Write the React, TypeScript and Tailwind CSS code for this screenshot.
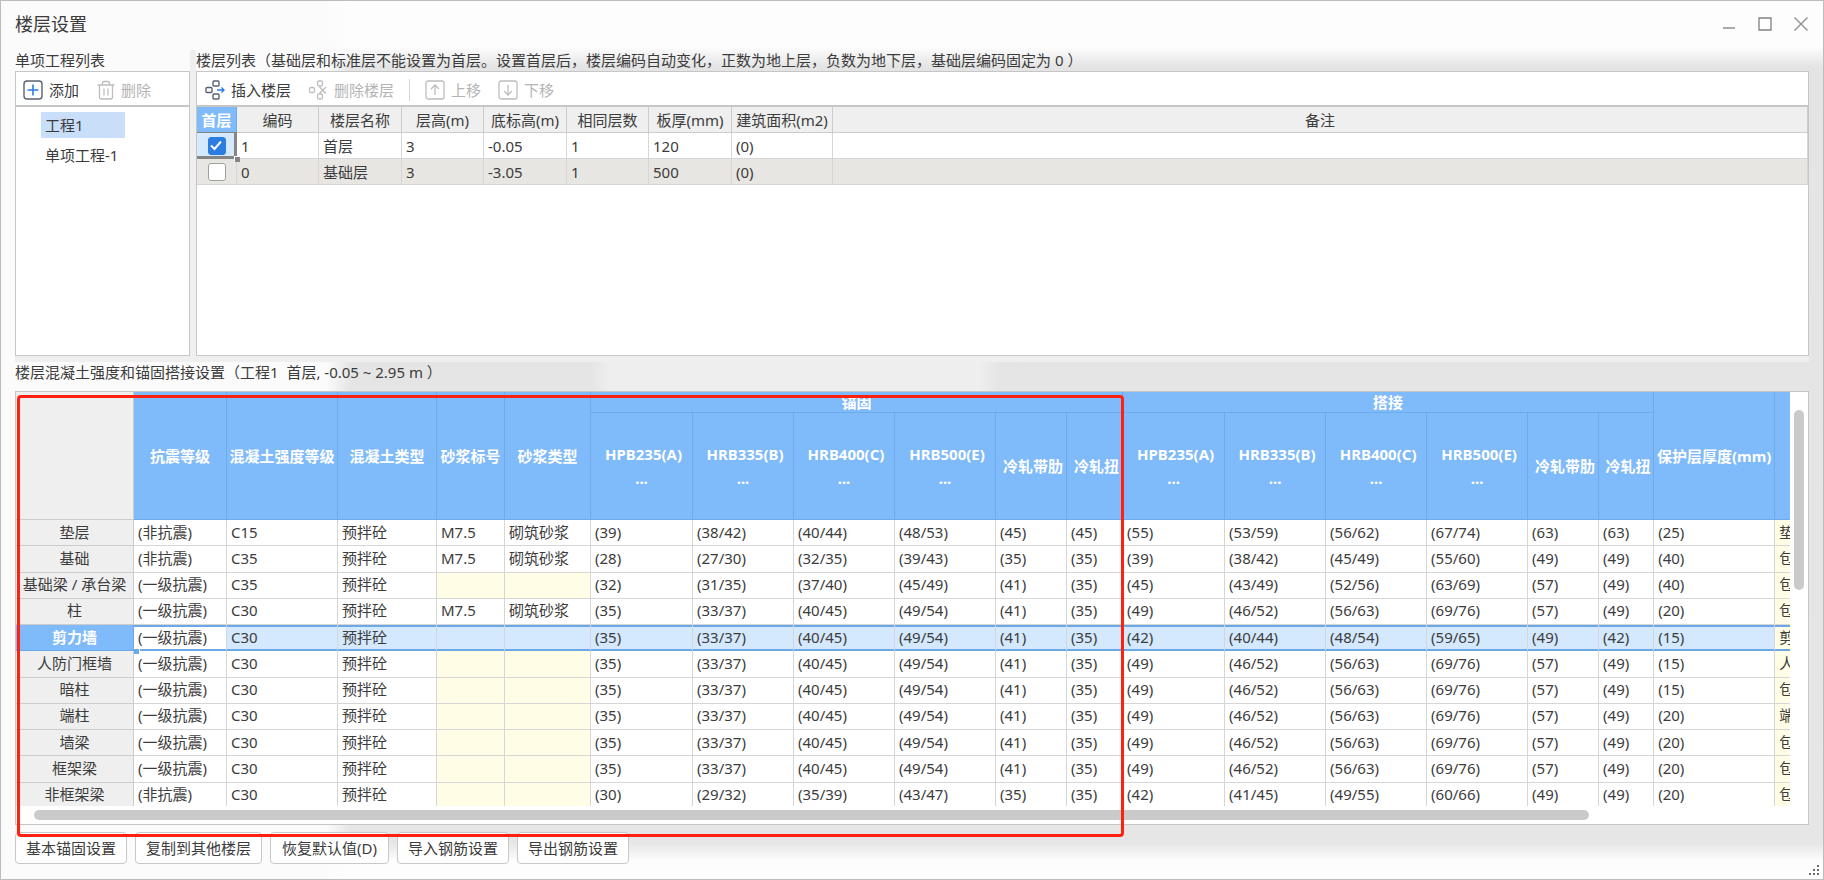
import React, { useState } from 'react'
import clsx from 'clsx'

interface Floor {
  code: string
  name: string
  height: string
  bottom: string
  same: string
  slab: string
  area: string
}

interface ConcreteRow {
  name: string
  seismic: string
  grade: string
  mortar: boolean
  anchor: string[]
  lap: string[]
  cover: string
  remark: string
}

const floors: Floor[] = [
  { code: '1', name: '首层', height: '3', bottom: '-0.05', same: '1', slab: '120', area: '(0)' },
  { code: '0', name: '基础层', height: '3', bottom: '-3.05', same: '1', slab: '500', area: '(0)' },
]

const floorColumns = [
  { label: '编码', width: 'w-[82px]' },
  { label: '楼层名称', width: 'w-[83px]' },
  { label: '层高(m)', width: 'w-[82px]' },
  { label: '底标高(m)', width: 'w-[83px]' },
  { label: '相同层数', width: 'w-[82px]' },
  { label: '板厚(mm)', width: 'w-[83px]' },
  { label: '建筑面积(m2)', width: 'w-[101px]' },
]

const commonAnchor = ['(35)', '(33/37)', '(40/45)', '(49/54)', '(41)', '(35)']
const commonLap = ['(49)', '(46/52)', '(56/63)', '(69/76)', '(57)', '(49)']

const rows: ConcreteRow[] = [
  {
    name: '垫层', seismic: '(非抗震)', grade: 'C15', mortar: true,
    anchor: ['(39)', '(38/42)', '(40/44)', '(48/53)', '(45)', '(45)'],
    lap: ['(55)', '(53/59)', '(56/62)', '(67/74)', '(63)', '(63)'],
    cover: '(25)', remark: '垫层',
  },
  {
    name: '基础', seismic: '(非抗震)', grade: 'C35', mortar: true,
    anchor: ['(28)', '(27/30)', '(32/35)', '(39/43)', '(35)', '(35)'],
    lap: ['(39)', '(38/42)', '(45/49)', '(55/60)', '(49)', '(49)'],
    cover: '(40)', remark: '包含',
  },
  {
    name: '基础梁 / 承台梁', seismic: '(一级抗震)', grade: 'C35', mortar: false,
    anchor: ['(32)', '(31/35)', '(37/40)', '(45/49)', '(41)', '(35)'],
    lap: ['(45)', '(43/49)', '(52/56)', '(63/69)', '(57)', '(49)'],
    cover: '(40)', remark: '包含',
  },
  { name: '柱', seismic: '(一级抗震)', grade: 'C30', mortar: true, anchor: commonAnchor, lap: commonLap, cover: '(20)', remark: '包含' },
  {
    name: '剪力墙', seismic: '(一级抗震)', grade: 'C30', mortar: false,
    anchor: commonAnchor,
    lap: ['(42)', '(40/44)', '(48/54)', '(59/65)', '(49)', '(42)'],
    cover: '(15)', remark: '剪力',
  },
  { name: '人防门框墙', seismic: '(一级抗震)', grade: 'C30', mortar: false, anchor: commonAnchor, lap: commonLap, cover: '(15)', remark: '人防' },
  { name: '暗柱', seismic: '(一级抗震)', grade: 'C30', mortar: false, anchor: commonAnchor, lap: commonLap, cover: '(15)', remark: '包含' },
  { name: '端柱', seismic: '(一级抗震)', grade: 'C30', mortar: false, anchor: commonAnchor, lap: commonLap, cover: '(20)', remark: '端柱' },
  { name: '墙梁', seismic: '(一级抗震)', grade: 'C30', mortar: false, anchor: commonAnchor, lap: commonLap, cover: '(20)', remark: '包含' },
  { name: '框架梁', seismic: '(一级抗震)', grade: 'C30', mortar: false, anchor: commonAnchor, lap: commonLap, cover: '(20)', remark: '包含' },
  {
    name: '非框架梁', seismic: '(非抗震)', grade: 'C30', mortar: false,
    anchor: ['(30)', '(29/32)', '(35/39)', '(43/47)', '(35)', '(35)'],
    lap: ['(42)', '(41/45)', '(49/55)', '(60/66)', '(49)', '(49)'],
    cover: '(20)', remark: '包含',
  },
]

const steelColumns = ['HPB235(A)', 'HRB335(B)', 'HRB400(C)', 'HRB500(E)', '冷轧带肋', '冷轧扭']

const gridColumns = [
  'w-[118px]', 'w-[93px]', 'w-[111px]', 'w-[99px]', 'w-[68px]', 'w-[86px]',
  'w-[102px]', 'w-[101px]', 'w-[101px]', 'w-[101px]', 'w-[71px]', 'w-[56px]',
  'w-[102px]', 'w-[101px]', 'w-[101px]', 'w-[101px]', 'w-[71px]', 'w-[55px]',
  'w-[121px]', 'w-[120px]',
]

const footerButtons = [
  { label: '基本锚固设置', width: 'w-[112px]' },
  { label: '复制到其他楼层', width: 'w-[127px]' },
  { label: '恢复默认值(D)', width: 'w-[119px]' },
  { label: '导入钢筋设置', width: 'w-[112px]' },
  { label: '导出钢筋设置', width: 'w-[112px]' },
]

const PlusIcon = () => (
  <svg width="20" height="20" viewBox="0 0 20 20" fill="none">
    <rect x="1" y="1" width="18" height="18" rx="3" stroke="#596273" strokeWidth="1.4" />
    <path d="M10 4.5v11M4.5 10h11" stroke="#2b7de1" strokeWidth="1.6" />
  </svg>
)

const TrashIcon = () => (
  <svg width="18" height="20" viewBox="0 0 18 20" fill="none" stroke="#bdbdbd" strokeWidth="1.3">
    <path d="M0.5 5h17M5.5 5V3q0-1.5 1.5-1.5h4q1.5 0 1.5 1.5v2M2.5 5v12q0 2 2 2h9q2 0 2-2V5M7 8.5v7M11 8.5v7" />
  </svg>
)

const InsertIcon = () => (
  <svg width="20" height="20" viewBox="0 0 20 20" fill="none" stroke="#596273" strokeWidth="1.4">
    <rect x="8" y="1" width="6" height="5" rx="1" />
    <rect x="1" y="7.5" width="6" height="5" rx="1" />
    <rect x="8" y="14" width="6" height="5" rx="1" />
    <path d="M12 10h7M16.5 7.5L19 10l-2.5 2.5" stroke="#2b7de1" />
  </svg>
)

const RemoveFloorIcon = () => (
  <svg width="20" height="20" viewBox="0 0 20 20" fill="none" stroke="#bdbdbd" strokeWidth="1.3">
    <rect x="9.5" y="1" width="5" height="5" rx="1.5" />
    <rect x="1.5" y="7.5" width="5" height="5" rx="1.5" />
    <rect x="9.5" y="14" width="5" height="5" rx="1.5" />
    <path d="M11.5 7l6.5 6.5M18 7l-6.5 6.5" />
  </svg>
)

const MoveIcon = ({ down }: { down?: boolean }) => (
  <svg width="20" height="20" viewBox="0 0 20 20" fill="none" stroke="#bdbdbd" strokeWidth="1.3">
    <rect x="1" y="1" width="18" height="18" rx="2" />
    <path d={down ? 'M10 5v10M6 11l4 4 4-4' : 'M10 15V5M6 9l4-4 4 4'} />
  </svg>
)

interface ToolButtonProps {
  icon: React.ReactNode
  label: string
  disabled?: boolean
}

const ToolButton = ({ icon, label, disabled }: ToolButtonProps) => (
  <button type="button" disabled={disabled} className="flex items-center gap-1.5 disabled:text-[#b4b4b4]">
    {icon}
    <span>{label}</span>
  </button>
)

const ProjectPanel = () => {
  const [selected, setSelected] = useState('工程1')

  return (
    <section className="flex w-[175px] shrink-0 flex-col">
      <h2 className="h-[21px]">单项工程列表</h2>
      <div className="flex flex-1 flex-col border border-[#c6c6c6] bg-white">
        <div className="flex h-[35px] shrink-0 items-center gap-[18px] border-b-2 border-[#c6c6c6] px-[7px] pt-0.5">
          <ToolButton icon={<PlusIcon />} label="添加" />
          <ToolButton icon={<TrashIcon />} label="删除" disabled />
        </div>
        <ul className="flex flex-col gap-1 pt-[5px] pl-[25px]">
          {['工程1', '单项工程-1'].map((name) => (
            <li key={name}>
              <button
                type="button"
                onClick={() => setSelected(name)}
                className={clsx('h-[26px] min-w-[84px] px-1 text-left', selected === name && 'bg-[#c9dff9]')}
              >
                {name}
              </button>
            </li>
          ))}
        </ul>
      </div>
    </section>
  )
}

const FloorPanel = () => {
  const [first, setFirst] = useState('1')

  return (
    <section className="flex min-w-0 flex-1 flex-col">
      <h2 className="h-[21px] truncate">
        楼层列表（基础层和标准层不能设置为首层。设置首层后，楼层编码自动变化，正数为地上层，负数为地下层，基础层编码固定为 0 ）
      </h2>
      <div className="flex flex-1 flex-col overflow-hidden border border-[#c6c6c6] bg-white">
        <div className="flex h-[35px] shrink-0 items-center border-b-2 border-[#c6c6c6] pt-0.5 pl-2">
          <div className="flex items-center gap-[17px]">
            <ToolButton icon={<InsertIcon />} label="插入楼层" />
            <ToolButton icon={<RemoveFloorIcon />} label="删除楼层" disabled />
          </div>
          <div className="mx-[15px] h-[22px] w-px bg-[#d8d8d8]" />
          <div className="flex items-center gap-[17px]">
            <ToolButton icon={<MoveIcon />} label="上移" disabled />
            <ToolButton icon={<MoveIcon down />} label="下移" disabled />
          </div>
        </div>
        <table className="w-full table-fixed border-separate border-spacing-0">
          <thead>
            <tr className="h-[26px] bg-[#efefef]">
              <th className="w-[40px] border-r border-b border-[#6fabeb] bg-[#7fbafa] p-0 text-white">首层</th>
              {floorColumns.map((column) => (
                <th key={column.label} className={clsx('border-r border-b border-[#cccccc] p-0 font-normal whitespace-nowrap', column.width)}>
                  {column.label}
                </th>
              ))}
              <th className="border-r border-b border-[#cccccc] p-0 font-normal">备注</th>
            </tr>
          </thead>
          <tbody>
            {floors.map((floor) => {
              const active = first === floor.code
              return (
                <tr key={floor.code} className={clsx('h-[26px]', !active && 'bg-[#e8e6e2]')}>
                  <td className={clsx('relative border-r border-b border-[#d6d6d6] p-0', active && 'bg-[#d5e9fe]')}>
                    <div className="flex items-center justify-center">
                      <input
                        type="checkbox"
                        aria-label={floor.name}
                        checked={active}
                        onChange={() => setFirst(floor.code)}
                        className="size-[18px] appearance-none rounded-[3px] border border-[#a0a0a0] bg-white checked:border-[#2b7de1] checked:bg-[#2b7de1]"
                      />
                    </div>
                    {active && (
                      <>
                        <svg className="pointer-events-none absolute top-[7px] left-[13px]" width="12" height="11" viewBox="0 0 12 11" fill="none">
                          <path d="M1 5.5l3.5 3.5L11 1.5" stroke="#fff" strokeWidth="2" />
                        </svg>
                        <div className="pointer-events-none absolute -inset-px border-t border-r-[3px] border-b-[3px] border-[#858585]" />
                        <div className="absolute -right-1 -bottom-1 z-10 size-[6px] border-t border-l border-white bg-[#858585]" />
                      </>
                    )}
                  </td>
                  {[floor.code, floor.name, floor.height, floor.bottom, floor.same, floor.slab, floor.area, ''].map((value, i) => (
                    <td key={i} className="border-r border-b border-[#d6d6d6] px-1 py-0">{value}</td>
                  ))}
                </tr>
              )
            })}
          </tbody>
        </table>
      </div>
    </section>
  )
}

const HeadCell = ({ children }: { children?: React.ReactNode }) => (
  <th rowSpan={2} className="border-r border-b border-[#6fabeb] p-0 whitespace-nowrap">{children}</th>
)

const ConcreteGrid = () => {
  const [selected, setSelected] = useState('剪力墙')

  return (
    <table className="h-[417px] w-[1879px] table-fixed border-separate border-spacing-0">
      <colgroup>
        {gridColumns.map((width, i) => (
          <col key={i} className={width} />
        ))}
      </colgroup>
      <thead className="bg-[#7fbafa] text-white">
        <tr className="h-[21px]">
          <th rowSpan={2} className="border-r border-b border-[#cccccc] bg-[#efefef]" />
          <HeadCell>抗震等级</HeadCell>
          <HeadCell>混凝土强度等级</HeadCell>
          <HeadCell>混凝土类型</HeadCell>
          <HeadCell>砂浆标号</HeadCell>
          <HeadCell>砂浆类型</HeadCell>
          <th colSpan={6} className="border-r border-b border-[#6fabeb] p-0 leading-5">锚固</th>
          <th colSpan={6} className="border-r border-b border-[#6fabeb] p-0 leading-5">搭接</th>
          <HeadCell>保护层厚度(mm)</HeadCell>
          <HeadCell />
        </tr>
        <tr className="h-[107px]">
          {[...steelColumns, ...steelColumns].map((label, i) => (
            <th key={i} className="border-r border-b border-[#6fabeb] p-0 pl-1 leading-6 whitespace-nowrap">
              {label}
              {label.startsWith('H') && <div className="-ml-1">...</div>}
            </th>
          ))}
        </tr>
      </thead>
      <tbody>
        {rows.map((row) => {
          const active = row.name === selected
          const values = [
            row.seismic, row.grade, '预拌砼',
            row.mortar ? 'M7.5' : '', row.mortar ? '砌筑砂浆' : '',
            ...row.anchor, ...row.lap, row.cover, row.remark,
          ]
          return (
            <tr key={row.name} onClick={() => setSelected(row.name)}>
              <th
                className={clsx(
                  'border-r border-b p-0 pb-0.5 whitespace-nowrap',
                  active ? 'border-[#6aa8e8] bg-[#7fbafa] text-white' : 'border-[#cccccc] bg-[#efefef] font-normal',
                )}
              >
                {row.name}
              </th>
              {values.map((value, i) => {
                const locked = value === '' || i === 18
                return (
                  <td
                    key={i}
                    className={clsx(
                      'relative border-r border-b px-1 pt-0 pb-0.5 whitespace-nowrap',
                      active
                        ? 'border-r-[#cfd8e2] border-b-[#6aa8e8] shadow-[inset_0_2px_0_#6aa8e8,inset_0_-1px_0_#6aa8e8]'
                        : 'border-[#d6d6d6]',
                      active && i > 0 && i < 18 && 'bg-[#d5e9fe]',
                      locked && (!active || i === 18) && 'bg-[#fffde6]',
                    )}
                  >
                    {value}
                    {active && i === 0 && (
                      <div className="absolute -bottom-1 left-0 z-10 size-[6px] border-t border-r border-white bg-[#6aa8e8]" />
                    )}
                  </td>
                )
              })}
            </tr>
          )
        })}
      </tbody>
    </table>
  )
}

const TitleBar = () => (
  <header className="flex h-[49px] shrink-0 items-center justify-between pr-px pb-1">
    <h1 className="text-lg">楼层设置</h1>
    <div className="flex items-center gap-[22px]">
      <button type="button" aria-label="最小化">
        <svg width="14" height="14" viewBox="0 0 14 14" stroke="#8c8c8c" strokeWidth="1.5"><path d="M1 11h12" /></svg>
      </button>
      <button type="button" aria-label="最大化">
        <svg width="14" height="14" viewBox="0 0 14 14" fill="none" stroke="#808080" strokeWidth="1.3"><path d="M1 1h12v12H1z" /></svg>
      </button>
      <button type="button" aria-label="关闭">
        <svg width="14" height="14" viewBox="0 0 14 14" stroke="#8c8c8c" strokeWidth="1.3"><path d="M0.5 0.5l13 13M13.5 0.5l-13 13" /></svg>
      </button>
    </div>
  </header>
)

export default function App() {
  return (
    <div className="relative flex min-h-screen flex-col overflow-hidden border border-[#bcbcbc] bg-[linear-gradient(90deg,#fbfbfb_325px,transparent_350px),linear-gradient(180deg,#fdfdfd_46px,#e4e4e4_66px,#e6e6e6_calc(100%-36px),#fdfdfd_calc(100%-18px))] px-[14px] font-['Noto_Sans','Noto_Sans_CJK_SC',sans-serif] text-[15px] leading-5 text-[#3c3c3c]">
      <TitleBar />

      <main className="flex flex-1 flex-col">
        <div className="flex min-h-[300px] flex-1">
          <ProjectPanel />
          <div className="w-[6px] shrink-0 bg-[#efefef]" />
          <FloorPanel />
        </div>
        <div className="h-[6px] bg-[#efefef]" />

        <section className="relative">
          <h2 className="h-[29px] bg-[linear-gradient(90deg,transparent_575px,#eeeeee_595px,#eeeeee_965px,transparent_985px)] whitespace-pre">
            楼层混凝土强度和锚固搭接设置（工程1  首层, -0.05 ~ 2.95 m ）
          </h2>
          <div className="border border-[#c6c6c6] bg-white">
            <div className="flex">
              <div className="h-[414px] min-w-0 flex-1 overflow-hidden">
                <ConcreteGrid />
              </div>
              <div className="w-[18px] shrink-0 pt-[18px] pl-1">
                <div className="h-[180px] w-[10px] rounded-full bg-[#cacaca]" />
              </div>
            </div>
            <div className="h-[18px] pt-1 pr-[219px] pl-[18px]">
              <div className="h-[10px] rounded-full bg-[#cacaca]" />
            </div>
          </div>
          {/* highlighted anchorage area */}
          <div className="pointer-events-none absolute top-[33px] left-[2px] z-20 h-[442px] w-[1107px] rounded border-[3px] border-[#ff2010]" />
        </section>

        <footer className="flex gap-2 pt-[7px] pb-[15px]">
          {footerButtons.map((button) => (
            <button
              key={button.label}
              type="button"
              className={clsx('h-[32px] rounded border border-[#c8c8c8] bg-white', button.width)}
            >
              {button.label}
            </button>
          ))}
        </footer>
      </main>

      {/* resize grip */}
      <svg className="absolute right-1 bottom-1" width="10" height="10" viewBox="0 0 10 10" fill="#6b6b75">
        <path d="M8 0h2v2H8zM4 4h2v2H4zM8 4h2v2H8zM0 8h2v2H0zM4 8h2v2H4zM8 8h2v2H8z" />
      </svg>
    </div>
  )
}
